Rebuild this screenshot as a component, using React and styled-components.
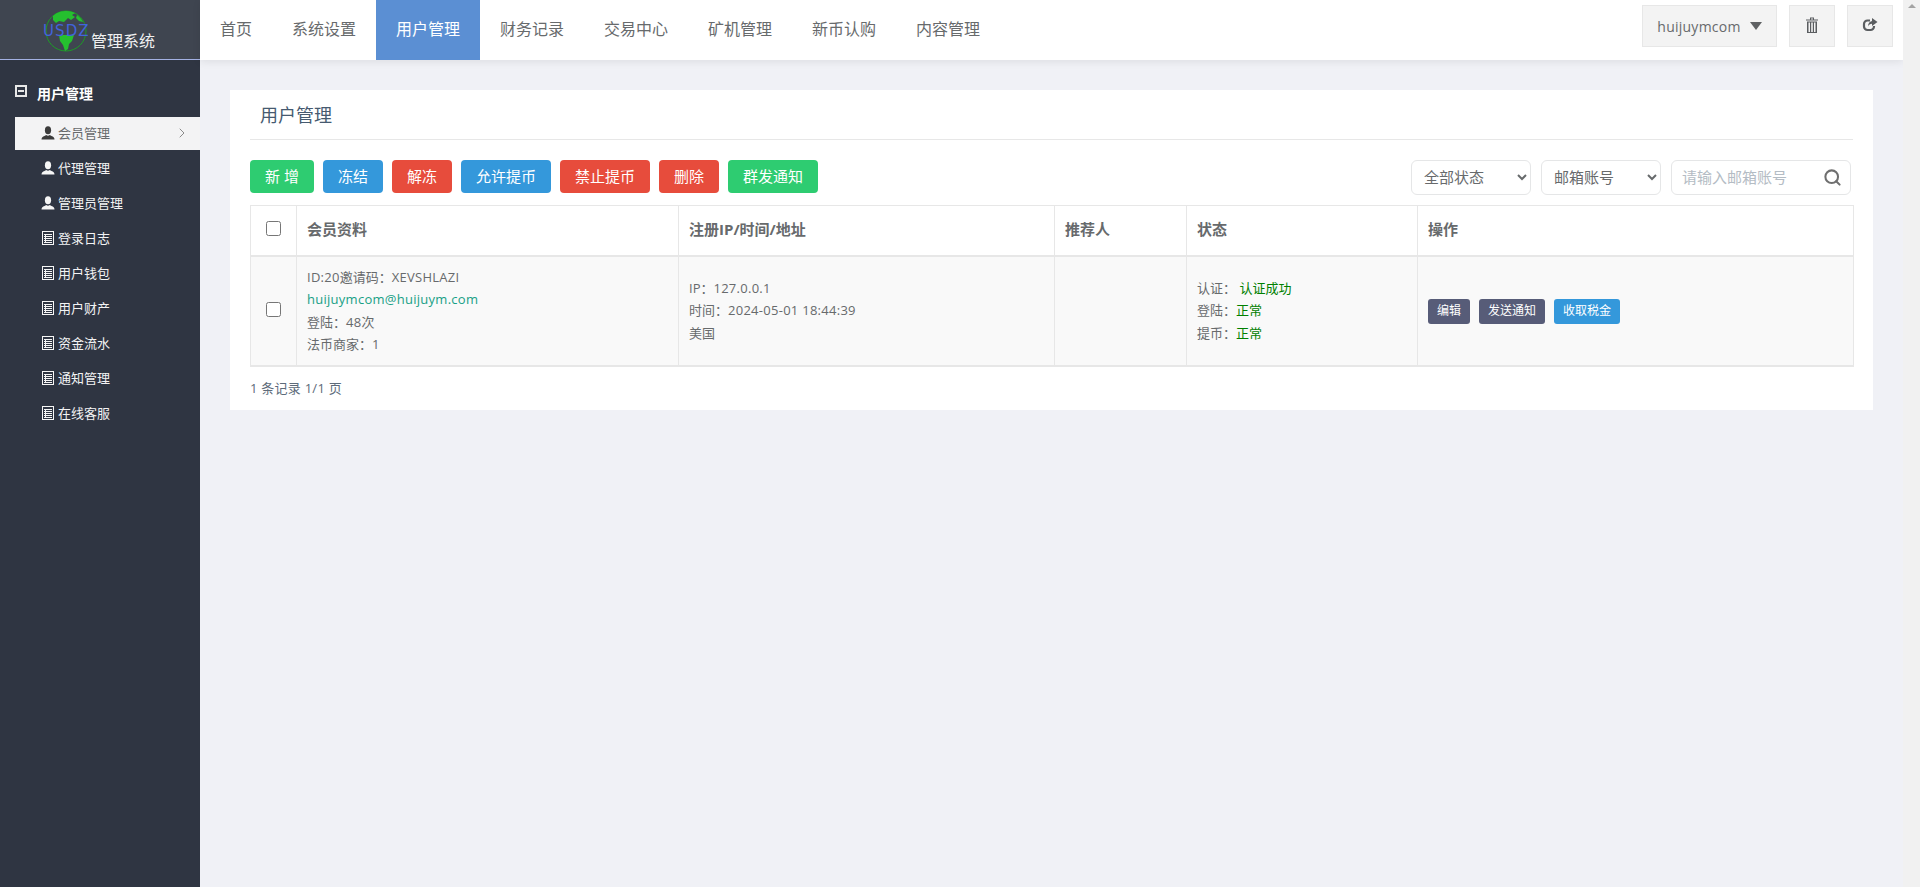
import styled, { createGlobalStyle } from 'styled-components';
import { ChevronRight, Search } from 'lucide-react';

const GlobalStyle = createGlobalStyle`
  html, body, #root {
    margin: 0;
    height: 100%;
  }
  body {
    font-family: "Open Sans", "Noto Sans CJK SC", sans-serif;
    font-size: 13px;
    color: #676a6c;
    background: #f0f1f6;
    overflow: hidden;
  }
  * { box-sizing: border-box; }
`;

const Shell = styled.div`
  display: flex;
  height: 100vh;
`;

const Sidebar = styled.aside`
  width: 200px;
  flex: none;
  background: #2f3542;
  color: #fff;
`;

const Brand = styled.div`
  height: 60px;
  background: #3f4550;
  border-bottom: 1px solid #a3b1e3;
  display: flex;
  align-items: flex-end;
  padding: 0 0 6px 44px;
`;

const GlobeWrap = styled.div`
  position: relative;
  width: 46px;
  height: 44px;
  margin-bottom: 2px;
`;

const GlobeText = styled.span`
  position: absolute;
  left: -1px;
  top: 16px;
  font-family: "DejaVu Sans", sans-serif;
  font-size: 15px;
  line-height: 16px;
  letter-spacing: 1.1px;
  color: #4263dc;
`;

const BrandName = styled.span`
  font-size: 16px;
  line-height: 20px;
  color: #f0f0f0;
  margin-left: 1px;
  margin-bottom: 2px;
`;

const SideTitle = styled.div`
  display: flex;
  align-items: center;
  height: 57px;
  padding: 9px 0 0 15px;
  font-size: 14px;
  font-weight: 700;
  gap: 10px;
`;

const MinusBox = styled.span`
  width: 12px;
  height: 12px;
  border: 2px solid #e8e8e8;
  margin-top: -4px;
  display: flex;
  align-items: center;
  justify-content: center;
  &::after {
    content: '';
    width: 6px;
    height: 2px;
    background: #e8e8e8;
  }
`;

const SideList = styled.ul`
  list-style: none;
  margin: 0;
  padding: 0 0 0 15px;
`;

const SideItem = styled.li`
  height: 33px;
  margin-bottom: 2px;
  display: flex;
  align-items: center;
  padding: 0 10px 2px 26px;
  gap: 3px;
  font-size: 13px;
  background: ${props => (props.$active ? '#f3f3f4' : 'transparent')};
  color: ${props => (props.$active ? '#676a6c' : '#f3f3f4')};
`;

const SideIcon = styled.svg`
  width: 14px;
  height: 14px;
  flex: none;
  color: ${props => (props.$active ? '#3b3b3b' : '#f6f6f6')};
`;

const SideLabel = styled.span`
  flex: 1;
`;

const Main = styled.div`
  flex: 1;
  min-width: 0;
  display: flex;
  flex-direction: column;
`;

const TopNav = styled.header`
  height: 60px;
  flex: none;
  background: #fff;
  box-shadow: 0 2px 8px rgba(0, 0, 0, 0.08);
  display: flex;
  justify-content: space-between;
  padding-right: 10px;
`;

const NavList = styled.nav`
  display: flex;
`;

const NavLink = styled.a`
  display: flex;
  align-items: center;
  padding: 0 20px 4px;
  font-size: 16px;
  color: ${props => (props.$active ? '#fff' : '#676a6c')};
  background: ${props => (props.$active ? '#5b8fd3' : 'transparent')};
`;

const NavTools = styled.div`
  display: flex;
  gap: 12px;
  padding-top: 5px;
`;

const ToolButton = styled.button`
  height: 42px;
  width: ${props => (props.$wide ? '135px' : '46px')};
  padding: 0;
  background: #f3f3f3;
  border: 1px solid #e7e7e7;
  color: #676a6c;
  font: inherit;
  font-size: 14px;
  letter-spacing: 0.25px;
  display: flex;
  align-items: center;
  justify-content: center;
  gap: 9px;
`;

const CaretDown = styled.span`
  width: 0;
  height: 0;
  border-left: 6px solid transparent;
  border-right: 6px solid transparent;
  border-top: 8px solid #5f6163;
`;

const ToolIcon = styled.svg`
  width: 16px;
  height: 16px;
  margin-top: -3px;
  color: #5a5d60;
`;

const Content = styled.main`
  padding: 30px;
`;

const Card = styled.section`
  background: #fff;
  padding: 0 20px;
  height: 320px;
`;

const CardTitle = styled.h2`
  margin: 0 0 20px;
  height: 50px;
  padding: 7px 0 0 10px;
  font-size: 18px;
  line-height: 36px;
  font-weight: 400;
  color: #465a70;
  border-bottom: 1px solid #e7e7e7;
`;

const Toolbar = styled.div`
  display: flex;
  justify-content: space-between;
  margin-bottom: 10px;
  height: 35px;
`;

const ButtonRow = styled.div`
  display: flex;
  gap: 9px;
`;

const ActionButton = styled.button`
  height: 33px;
  padding: 0 15px 2px;
  border: 0;
  border-radius: 4px;
  background: ${props => props.$color};
  color: #fff;
  font: inherit;
  font-size: 15px;
  white-space: pre;
`;

const FilterRow = styled.div`
  display: flex;
  gap: 10px;
  padding-right: 2px;
`;

const FilterSelect = styled.select`
  width: 120px;
  height: 35px;
  padding: 0 8px 2px;
  background: #fff;
  border: 1px solid #e5e6e7;
  border-radius: 6px;
  color: #676a6c;
  font: inherit;
  font-size: 15px;
`;

const SearchBox = styled.div`
  width: 180px;
  height: 35px;
  display: flex;
  align-items: center;
  padding: 0 8px 0 10px;
  border: 1px solid #e5e6e7;
  border-radius: 6px;
  color: #6f6f6f;
`;

const SearchInput = styled.input`
  flex: 1;
  min-width: 0;
  border: 0;
  outline: 0;
  padding: 0 0 2px;
  font: inherit;
  font-size: 15px;
  &::placeholder {
    color: #b4bcc4;
  }
`;

const Table = styled.table`
  width: 1603px;
  table-layout: fixed;
  border-collapse: collapse;
  border: 1px solid #e7e7e7;
  border-bottom-width: 2px;
`;

const HeadCell = styled.th`
  height: 50px;
  padding: 0 10px 4px;
  text-align: left;
  font-size: 15px;
  font-weight: 700;
  color: #676a6c;
  border-left: 1px solid #e7e7e7;
  border-bottom: 2px solid #e7e7e7;
`;

const BodyCell = styled.td`
  height: 110px;
  padding: 0 10px;
  font-size: 13px;
  line-height: 22.5px;
  background: #f9f9f9;
  border-left: 1px solid #e7e7e7;
`;

const Check = styled.input.attrs({ type: 'checkbox' })`
  display: block;
  width: 15px;
  height: 15px;
  margin: ${props => (props.$head ? '0 auto' : '-3px auto 0')};
`;

const Latin = styled.span`
  letter-spacing: 0.27px;
`;

const Email = styled.div`
  color: #18a086;
  letter-spacing: 0.27px;
`;

const Ok = styled.span`
  color: #008000;
`;

const RowActions = styled.div`
  display: flex;
  gap: 9px;
  margin-top: 1px;
`;

const SmallButton = styled.button`
  height: 25px;
  padding: 0 9px;
  border: 0;
  border-radius: 3px;
  background: ${props => props.$color};
  color: #fff;
  font: inherit;
  font-size: 12px;
`;

const Pagination = styled.div`
  margin-top: 11px;
  line-height: 20px;
  font-size: 13px;
  letter-spacing: 0.25px;
  color: #5d6b7a;
`;

const ScrollTrack = styled.div`
  width: 17px;
  flex: none;
  background: #f1f1f1;
  display: flex;
  justify-content: center;
  padding-top: 2px;
  &::before {
    content: '';
    width: 0;
    height: 0;
    border-left: 4px solid transparent;
    border-right: 4px solid transparent;
    border-bottom: 4px solid #a3a3a3;
    margin-top: 2px;
  }
`;

const UserIcon = ({ active }) => (
  <SideIcon $active={active} viewBox="0 0 14 14" fill="currentColor">
    <ellipse cx="7" cy="4.2" rx="3.1" ry="4" />
    <path d="M.5 13.6c0-2.400 1.200-3.200 3-3.700l1.700-.8c1 .8 2.600.8 3.600 0l1.700.8c1.800.5 3 1.300 3 3.700z" />
  </SideIcon>
);

const ListIcon = () => (
  <SideIcon viewBox="0 0 14 14" fill="none" stroke="currentColor">
    <rect x="1.500" y=".5" width="11" height="13" />
    <path d="M3 3.500h8M3 5.500h8M3 7.500h8M3 9.500h8M3 11.500h8M4.500 3v9" />
  </SideIcon>
);

const TrashIcon = () => (
  <ToolIcon viewBox="0 0 16 16" fill="currentColor">
    <path d="M2 2.500h12v1H2zM6 .5h4v2H9v-1H7v1H6z" />
    <path d="M3 4.500h10V16H3zM4.500 5.500V15h1.500V5.500zM7.200 5.500V15h1.600V5.500zM10 5.500V15h1.500V5.500z" fillRule="evenodd" />
  </ToolIcon>
);

const ShareIcon = () => (
  <ToolIcon viewBox="0 0 16 16">
    <path
      d="M8 3.500H5.500A3.500 3.500 0 0 0 2 7v2.500A3.500 3.500 0 0 0 5.500 13h3A3.500 3.500 0 0 0 12 9.500V9"
      fill="none"
      stroke="currentColor"
      strokeWidth="2.200"
    />
    <path d="M10 1l5.500 4-5.500 4V6.800C8.200 6.800 6.800 7.600 6 9.500c0-3 1.500-5 4-5.500z" fill="currentColor" />
  </ToolIcon>
);

const Globe = () => (
  <svg width="46" height="46" viewBox="0 0 46 46">
    <circle cx="22" cy="24" r="20" fill="none" stroke="#1d9a27" strokeWidth="1" />
    <path d="M9 9c4-4 9-5 14-5 3 0 6 1 8 2l-3 2 3 2-4 3-3-2-4 4-5-1-3 2-3-3z" fill="#25c02f" />
    <path d="M33 8c3 2 5 5 6 7l-4-1-3-3z" fill="#25c02f" />
    <path d="M15 28h15l-2 6-3 3-1 5-3 2-2-6-3-4z" fill="#25c02f" />
  </svg>
);

const navItems = ['首页', '系统设置', '用户管理', '财务记录', '交易中心', '矿机管理', '新币认购', '内容管理'];

const sideItems = [
  { label: '会员管理', icon: 'user', active: true },
  { label: '代理管理', icon: 'user' },
  { label: '管理员管理', icon: 'user' },
  { label: '登录日志', icon: 'list' },
  { label: '用户钱包', icon: 'list' },
  { label: '用户财产', icon: 'list' },
  { label: '资金流水', icon: 'list' },
  { label: '通知管理', icon: 'list' },
  { label: '在线客服', icon: 'list' },
];

const toolbarButtons = [
  { label: '新 增', color: '#2ecc71' },
  { label: '冻结', color: '#3498db' },
  { label: '解冻', color: '#e74c3c' },
  { label: '允许提币', color: '#3498db' },
  { label: '禁止提币', color: '#e74c3c' },
  { label: '删除', color: '#e74c3c' },
  { label: '群发通知', color: '#2ecc71' },
];

const columns = [46, 382, 376, 132, 231, 436];

export default function App() {
  return (
    <Shell>
      <GlobalStyle />
      <Sidebar>
        <Brand>
          <GlobeWrap>
            <Globe />
            <GlobeText>USDZ</GlobeText>
          </GlobeWrap>
          <BrandName>管理系统</BrandName>
        </Brand>
        <SideTitle>
          <MinusBox />
          用户管理
        </SideTitle>
        <SideList>
          {sideItems.map((item) => (
            <SideItem key={item.label} $active={item.active}>
              {item.icon === 'user' ? <UserIcon active={item.active} /> : <ListIcon />}
              <SideLabel>{item.label}</SideLabel>
              {item.active && <ChevronRight size={16} color="#8a8a8a" strokeWidth={1.5} />}
            </SideItem>
          ))}
        </SideList>
      </Sidebar>

      <Main>
        <TopNav>
          <NavList>
            {navItems.map((item) => (
              <NavLink key={item} $active={item === '用户管理'}>
                {item}
              </NavLink>
            ))}
          </NavList>
          <NavTools>
            <ToolButton $wide>
              huijuymcom
              <CaretDown />
            </ToolButton>
            <ToolButton>
              <TrashIcon />
            </ToolButton>
            <ToolButton>
              <ShareIcon />
            </ToolButton>
          </NavTools>
        </TopNav>

        <Content>
          <Card>
            <CardTitle>用户管理</CardTitle>
            <Toolbar>
              <ButtonRow>
                {toolbarButtons.map((btn) => (
                  <ActionButton key={btn.label} $color={btn.color}>
                    {btn.label}
                  </ActionButton>
                ))}
              </ButtonRow>
              <FilterRow>
                <FilterSelect defaultValue="all">
                  <option value="all">全部状态</option>
                </FilterSelect>
                <FilterSelect defaultValue="email">
                  <option value="email">邮箱账号</option>
                </FilterSelect>
                <SearchBox>
                  <SearchInput placeholder="请输入邮箱账号" />
                  <Search size={19} strokeWidth={2.6} />
                </SearchBox>
              </FilterRow>
            </Toolbar>

            <Table>
              <colgroup>
                {columns.map((w, i) => (
                  <col key={i} width={w} />
                ))}
              </colgroup>
              <thead>
                <tr>
                  <HeadCell>
                    <Check $head />
                  </HeadCell>
                  <HeadCell>会员资料</HeadCell>
                  <HeadCell>注册IP/时间/地址</HeadCell>
                  <HeadCell>推荐人</HeadCell>
                  <HeadCell>状态</HeadCell>
                  <HeadCell>操作</HeadCell>
                </tr>
              </thead>
              <tbody>
                <tr>
                  <BodyCell>
                    <Check />
                  </BodyCell>
                  <BodyCell>
                    <div>
                      <Latin>ID:20</Latin>邀请码：<Latin>XEVSHLAZI</Latin>
                    </div>
                    <Email>huijuymcom@huijuym.com</Email>
                    <div>
                      登陆：<Latin>48</Latin>次
                    </div>
                    <div>法币商家：1</div>
                  </BodyCell>
                  <BodyCell>
                    <div>
                      IP：<Latin>127.0.0.1</Latin>
                    </div>
                    <div>
                      时间：<Latin>2024-05-01 18:44:39</Latin>
                    </div>
                    <div>美国</div>
                  </BodyCell>
                  <BodyCell />
                  <BodyCell>
                    <div>
                      认证： <Ok>认证成功</Ok>
                    </div>
                    <div>
                      登陆：<Ok>正常</Ok>
                    </div>
                    <div>
                      提币：<Ok>正常</Ok>
                    </div>
                  </BodyCell>
                  <BodyCell>
                    <RowActions>
                      <SmallButton $color="#575c78">编辑</SmallButton>
                      <SmallButton $color="#575c78">发送通知</SmallButton>
                      <SmallButton $color="#3498db">收取税金</SmallButton>
                    </RowActions>
                  </BodyCell>
                </tr>
              </tbody>
            </Table>
            <Pagination>1 条记录 1/1 页</Pagination>
          </Card>
        </Content>
      </Main>
      <ScrollTrack />
    </Shell>
  );
}
